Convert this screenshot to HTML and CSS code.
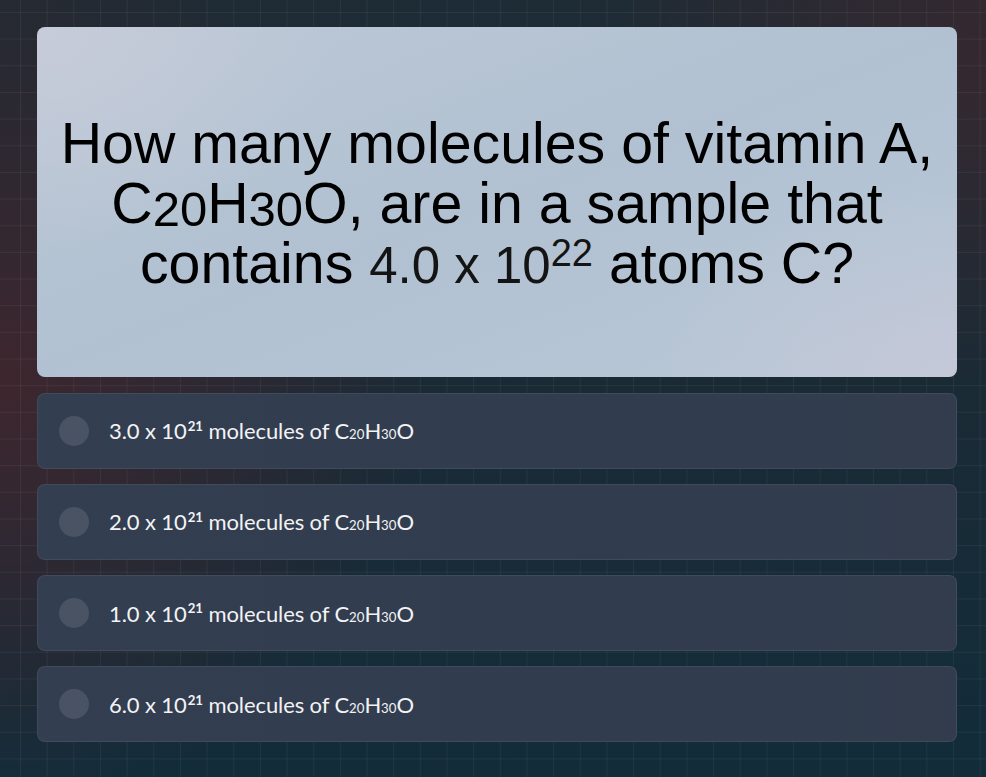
FILE: index.html
```html
<!DOCTYPE html>
<html lang="en">
<head>
<meta charset="utf-8">
<title>Quiz</title>
<link rel="stylesheet" href="styles.css">
</head>
<body>
<main class="quiz">
  <section class="question-card">
    <h1 class="question">How many molecules of vitamin A, C<sub>20</sub>H<sub>30</sub>O, are in a sample that contains <span class="num">4.0 x 10<sup>22</sup></span> atoms C?</h1>
  </section>
  <ul class="options">
    <li class="option"><span class="radio"></span><span class="label">3.0 x 10<sup>21</sup> molecules of C<sub>20</sub>H<sub>30</sub>O</span></li>
    <li class="option"><span class="radio"></span><span class="label">2.0 x 10<sup>21</sup> molecules of C<sub>20</sub>H<sub>30</sub>O</span></li>
    <li class="option"><span class="radio"></span><span class="label">1.0 x 10<sup>21</sup> molecules of C<sub>20</sub>H<sub>30</sub>O</span></li>
    <li class="option"><span class="radio"></span><span class="label">6.0 x 10<sup>21</sup> molecules of C<sub>20</sub>H<sub>30</sub>O</span></li>
  </ul>
</main>
</body>
</html>
```

FILE: styles.css
```css
html, body {
  margin: 0;
  padding: 0;
  height: 100%;
}

body {
  font-family: "Liberation Sans", Arial, sans-serif;
  background-color: #182a36;
  background-image:
    linear-gradient(rgba(255,255,255,0.05) 1px, transparent 1px),
    linear-gradient(90deg, rgba(255,255,255,0.05) 1px, transparent 1px),
    radial-gradient(ellipse 430px 430px at 0px 380px, rgba(64,38,46,0.95), rgba(64,38,46,0) 100%),
    radial-gradient(ellipse 380px 320px at 986px 60px, rgba(54,40,48,0.95), rgba(54,40,48,0) 100%),
    radial-gradient(ellipse 500px 260px at 470px 0px, rgba(28,44,54,0.9), rgba(28,44,54,0) 100%),
    linear-gradient(180deg, #222a33 0%, #1b2a35 45%, #122c3a 100%);
  background-size: 26.667px 26.667px, 26.667px 26.667px, auto, auto, auto, auto;
  background-position: 0 12px, 20px 0, 0 0, 0 0, 0 0, 0 0;
  overflow: hidden;
}

.quiz {
  width: 920px;
  padding: 27px 0 0 37px;
  display: flex;
  flex-direction: column;
  gap: 15.5px;
}

.question-card {
  height: 350px;
  border-radius: 8px;
  display: flex;
  align-items: center;
  justify-content: center;
  background:
    radial-gradient(ellipse 300px 220px at 0 0, rgba(200,204,218,0.9), rgba(200,204,218,0)),
    radial-gradient(ellipse 320px 200px at 100% 100%, rgba(198,200,216,0.9), rgba(198,200,216,0)),
    linear-gradient(160deg, #bcc8d6 0%, #b1c1d1 50%, #b8c8d7 100%);
}

.question {
  margin: 0;
  padding: 4px 10px 0;
  text-align: center;
  font-weight: normal;
  font-size: 57.3px;
  line-height: 60px;
  color: #000;
}

.question sub {
  font-size: 49px;
  line-height: 0;
  vertical-align: -0.06em;
}

.question .num {
  font-size: 51px;
  color: #141414;
}

.question sup {
  font-size: 38px;
  line-height: 0;
  vertical-align: 0.45em;
}

.options {
  list-style: none;
  margin: 0;
  padding: 0;
  display: flex;
  flex-direction: column;
  gap: 15.3px;
}

.option {
  height: 76px;
  box-sizing: border-box;
  display: flex;
  align-items: center;
  gap: 20px;
  padding-left: 21px;
  border-radius: 8px;
  border: 1px solid rgba(255,255,255,0.07);
  background: linear-gradient(90deg, #333e50 0%, #313d4f 60%, #323c4d 100%);
}

.radio {
  width: 30px;
  height: 30px;
  border-radius: 50%;
  background: #4a5364;
  flex: none;
}

.label {
  font-family: Lato, "Open Sans", sans-serif;
  font-size: 22px;
  letter-spacing: -0.1px;
  color: #f2f3f5;
}

.label sup {
  font-size: 0.6em;
  font-weight: bold;
  line-height: 0;
  vertical-align: 0.62em;
  letter-spacing: 0;
  margin-left: 1px;
}

.label sub {
  font-size: 0.6em;
  line-height: 0;
  vertical-align: baseline;
  letter-spacing: 0;
}
```
